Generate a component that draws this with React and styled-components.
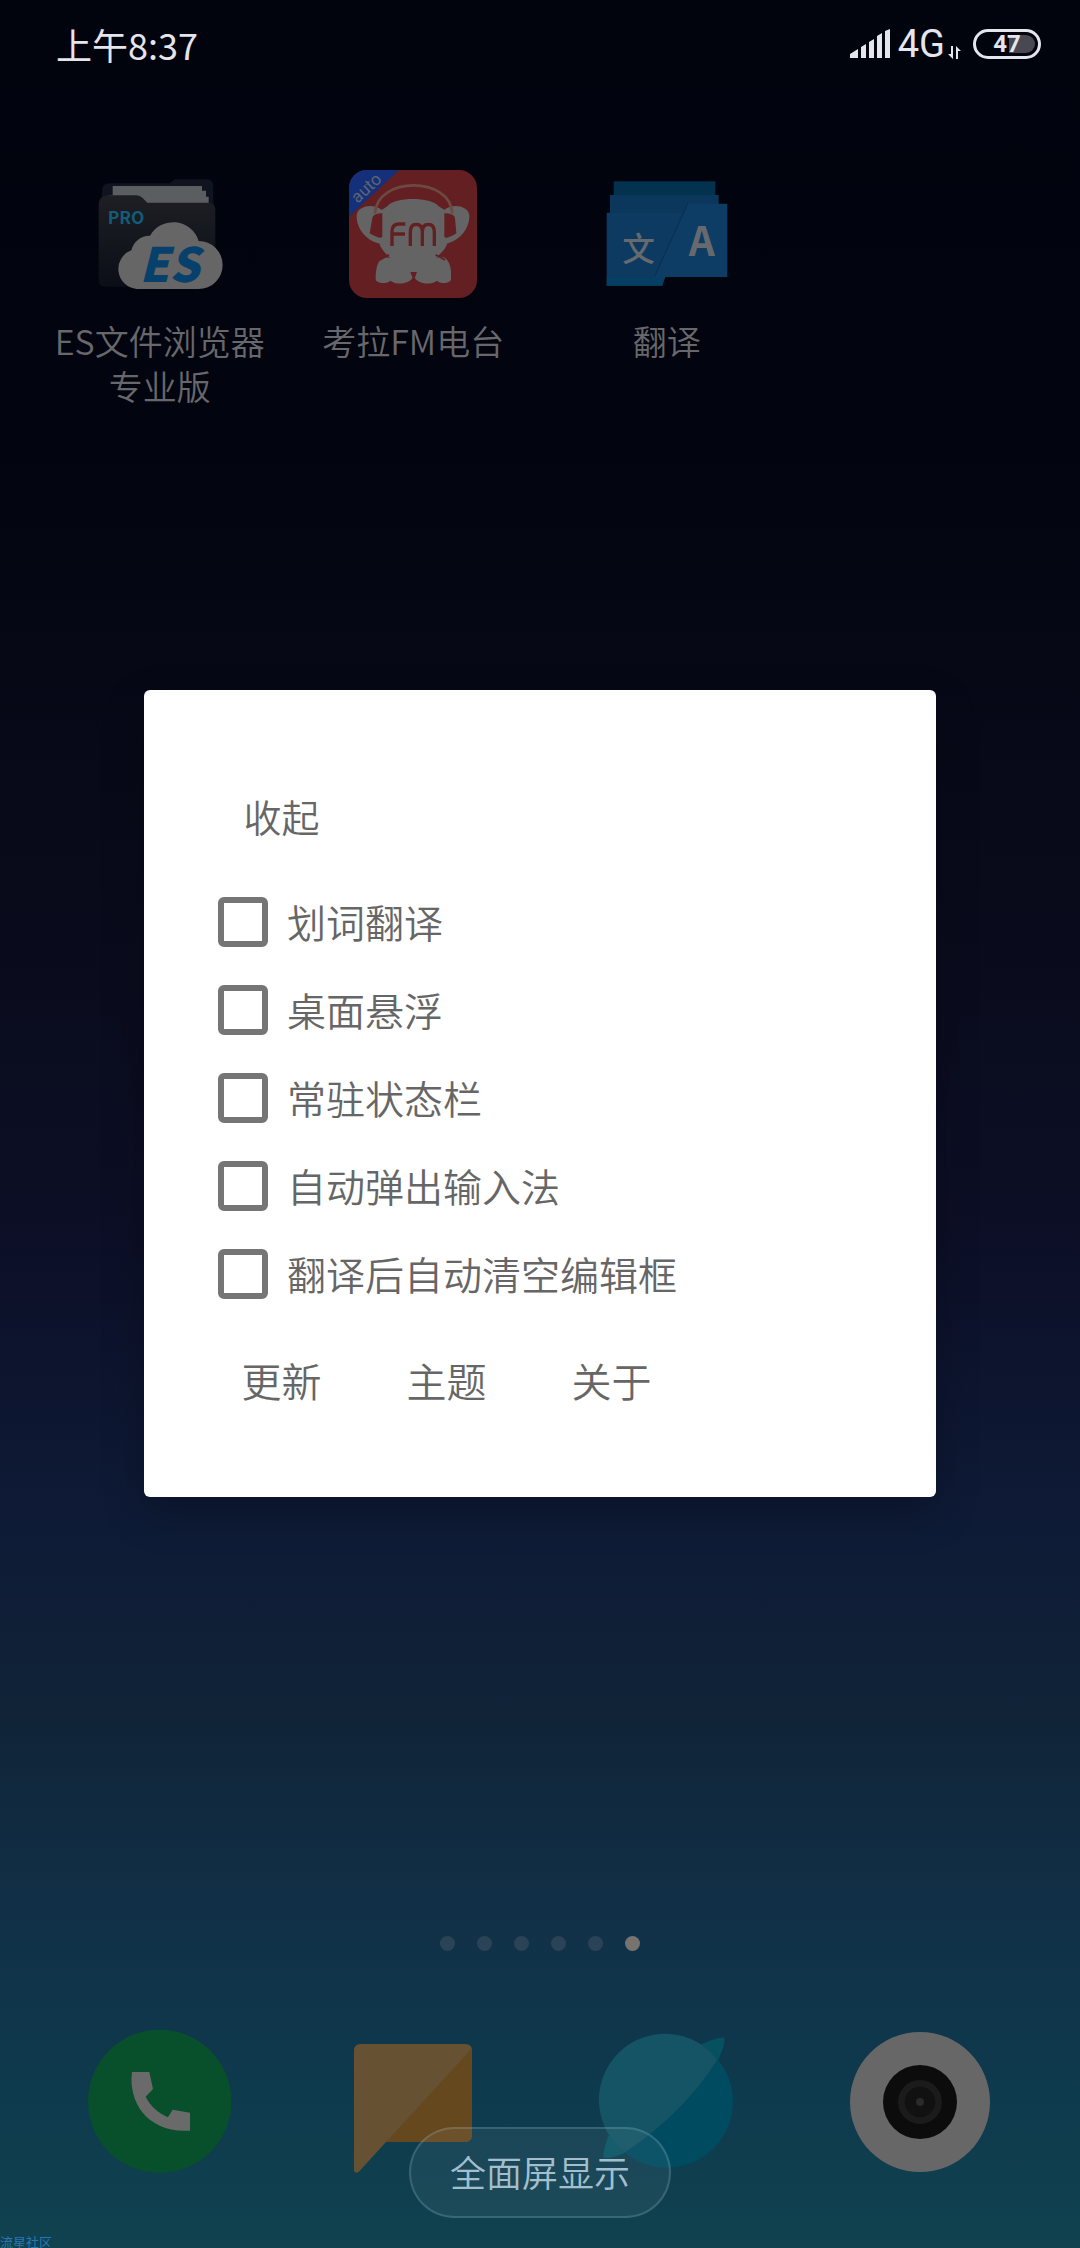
import React from 'react';
import styled, {createGlobalStyle} from 'styled-components';


const apps = [
  {name: 'ES文件浏览器专业版', Icon: EsIcon},
  {name: '考拉FM电台', Icon: KoalaIcon},
  {name: '翻译', Icon: TranslateIcon},
];

const dock = [
  {name: '电话', Icon: PhoneIcon},
  {name: '短信', Icon: MessageIcon},
  {name: '浏览器', Icon: BrowserIcon},
  {name: '相机', Icon: CameraIcon},
];

const options = ['划词翻译', '桌面悬浮', '常驻状态栏', '自动弹出输入法', '翻译后自动清空编辑框'];
const actions = ['更新', '主题', '关于'];
const pages = [0, 1, 2, 3, 4, 5];


export default () => {

    return(
        <Screen>
            <GlobalStyle />
            <StatusBar>
              <Time>上午8:37</Time>
              <StatusIcons>
                <SignalIcon />
                <Network>4G<ArrowsIcon /></Network>
                <Battery><BatteryLevel />47</Battery>
              </StatusIcons>
            </StatusBar>

            <AppGrid>
              {apps.map(({name, Icon}) => <AppButton key={name}>
                <Icon />
                <AppName>{name}</AppName>
              </AppButton>)}
            </AppGrid>

            <Dots>
              {pages.map(page => <Dot key={page} $active={page === 5} />)}
            </Dots>

            <Dock>
              {dock.map(({name, Icon}) => <DockButton key={name} aria-label={name}>
                <Icon />
              </DockButton>)}
            </Dock>

            <FullScreenButton>全面屏显示</FullScreenButton>
            <Community>流星社区</Community>

            <Overlay>
              <Dialog role="dialog">
                <DialogRow $height="122px">
                  <TextButton>收起</TextButton>
                </DialogRow>
                {options.map(option => <Option key={option}>
                  <CheckBox type="checkbox" />
                  <OptionText>{option}</OptionText>
                </Option>)}
                <DialogRow $height="128px">
                  {actions.map(action => <TextButton $large key={action}>{action}</TextButton>)}
                </DialogRow>
              </Dialog>
            </Overlay>
        </Screen>
    );

};


function SignalIcon() {
  return (
    <svg width="40" height="30" viewBox="0 0 40 30" fill="#e5e5ee">
      <path d="M0 25l8-5v9H0zM11 18l5-3v14h-5zM19 13l5-3v19h-5zM27 7l5-3v25h-5zM35 2l5-2v29h-5z" />
    </svg>
  );
}

function ArrowsIcon() {
  return (
    <svg width="13" height="13" viewBox="0 0 13 13" fill="#e5e5ee">
      <path d="M3 0h2v13L0 8h3zM8 13h2V5h3L8 0z" />
    </svg>
  );
}

function EsIcon() {
  return (
    <AppSvg viewBox="168 60 384 384">
      <defs>
        <linearGradient id="folder" x1="0" y1="0" x2="0" y2="1">
          <stop offset="0" stopColor="#1d1f24" />
          <stop offset="1" stopColor="#0b0e17" />
        </linearGradient>
      </defs>
      <path d="M186 170v-48q0-22 24-22h180l14-12h96q20 0 20 22v60z" fill="#101320" />
      <path d="M218 108h268v14h12v18h8v26H206v-30h12z" fill="#5a5e60" />
      <path d="M176 166q0-30 28-30h86q10 0 18 8l14 14h182q22 0 22 22v210q0 20-20 20H196q-20 0-20-20z" fill="url(#folder)" />
      <Glyphs x="203" y="221" fontSize="52" fontWeight="700" fill="#145b78">PRO</Glyphs>
      <path d="M290 417a60 60 0 0 1-16-116 56 56 0 0 1 56-44 80 80 0 0 1 146 16 72 72 0 0 1 0 144z" fill="#666" />
      <Glyphs x="298" y="397" fontSize="142" fontWeight="900" fontStyle="italic" fill="#07416b">ES</Glyphs>
    </AppSvg>
  );
}

function KoalaIcon() {
  return (
    <AppSvg viewBox="120 60 384 384">
      <clipPath id="tile"><rect x="120" y="60" width="384" height="384" rx="54" /></clipPath>
      <g clipPath="url(#tile)">
        <rect x="120" y="60" width="384" height="384" fill="#641f22" />
        <path d="M120 60h150L120 200z" fill="#14307a" />
        <g fill="#646464">
          <path d="M213 176c-26-16-68-6-70 20-2 38 28 76 66 84l20 2v-96zM411 176c26-16 68-6 70 20 2 38-28 76-66 84l-20 2v-96z" />
          <path d="M236 168c20-28 130-28 152 0l32 20v60c0 40-16 54-40 76 24-12 42 4 46 38v26c-2 14-34 14-42 4-20 14-58 12-70-14-12 26-50 28-70 14-8 10-42 10-44-4 0-44 10-72 44-64-22-20-38-38-38-76v-60z" />
        </g>
        <path d="M198 190c6-112 226-112 232 0" fill="none" stroke="#6b4a43" strokeWidth="8" />
        <path d="M190 204q2-14 30-14v70q-4 10-38-10zM438 204q-2-14-32-14v70q4 10 36-10z" fill="#641f22" />
        <path d="M249 288v-44q0-22 22-22h18M250 252h38M304 288v-42q0-23 18-23t18 23v42M340 246q0-23 18-23t18 23v42" fill="none" stroke="#641f22" strokeWidth="10" />
        <path d="M212 330l28-16M408 330l-28-16" fill="none" stroke="#641f22" strokeWidth="5" />
        <path d="M304 366h20l-10 26z" fill="#641f22" />
      </g>
      <AutoLabel x="-52" y="14" fontSize="52" fill="#5f6472" transform="translate(174 116) rotate(-43)">auto</AutoLabel>
    </AppSvg>
  );
}

function TranslateIcon() {
  return (
    <AppSvg viewBox="102 60 384 384">
      <path d="M134 94h305v50H134z" fill="#03324e" />
      <path d="M123 135h326v60H123z" fill="#0b375c" />
      <path d="M113 188h235l-68 219H113z" fill="#0c3a61" />
      <path d="M113 380h176l-10 27H113z" fill="#073e63" />
      <path d="M356 161h119v220H256z" fill="#0d3c65" />
      <path d="M356 161l-100 220" stroke="#092f50" strokeWidth="3" />
      <Glyphs x="160" y="332" fontSize="98" fontWeight="500" fill="#66696e">文</Glyphs>
      <Glyphs x="359" y="317" fontSize="122" fontWeight="700" fill="#66696e">A</Glyphs>
    </AppSvg>
  );
}

function PhoneIcon() {
  return (
    <DockSvg viewBox="84 387 432 432">
      <circle cx="299" cy="604" r="215" fill="#08502b" />
      <path d="M216 516h52l11 51-22 23c14 28 36 48 67 62l14-23 52 9v54c-126 8-186-84-174-176z" fill="#6a6a6a" />
    </DockSvg>
  );
}

function MessageIcon() {
  return (
    <DockSvg viewBox="846 387 432 432">
      <path d="M905 432h314q20 0 20 20v254q0 20-20 20H981l-80 88q-8 8-16 0V452q0-20 20-20z" fill="#665132" />
      <path d="M1238 446v260q0 20-20 20H981z" fill="#65481e" />
    </DockSvg>
  );
}

function BrowserIcon() {
  return (
    <DockSvg viewBox="615 387 432 432">
      <path d="M928 436q40-20 72-24 12 10-18 74z" fill="#07505f" />
      <path d="M656 706q-18 46-16 66 22 8 74-18z" fill="#0a5565" />
      <circle cx="831" cy="605" r="198" fill="#004b5f" />
      <path d="M982 479A198 198 0 1 0 705 757q178-120 277-278z" fill="#155464" />
    </DockSvg>
  );
}

function CameraIcon() {
  return (
    <DockSvg viewBox="267 387 432 432">
      <circle cx="483" cy="606" r="210" fill="#676767" />
      <circle cx="483" cy="606" r="111" fill="#0c0c0c" />
      <circle cx="483" cy="606" r="56" fill="#111" stroke="#1b1b1b" strokeWidth="20" />
      <circle cx="483" cy="606" r="12" fill="#2a2a2a" />
    </DockSvg>
  );
}


const GlobalStyle = createGlobalStyle`
    body {
      margin: 0;
      font-family: "Noto Sans CJK SC", "Noto Sans", sans-serif;
    }

    * {
      box-sizing: border-box;
    }

    button {
      padding: 0;
      border: 0;
      background: none;
      font-family: inherit;
      cursor: pointer;
    }
`;

const Screen = styled.div`
    position: relative;
    display: flex;
    flex-direction: column;
    min-height: 100vh;
    padding-bottom: 75px;
    background: linear-gradient(#01030d 0%, #02040f 20%, #060816 30%, #090b1b 40%, #0c0e25 54%, #0e1a36 67%, #102337 76%, #113047 85%, #0e3a4d 93%, #10424f 100%);
`;

const StatusBar = styled.header`
    display: flex;
    justify-content: space-between;
    align-items: center;
    height: 90px;
    padding: 0 39px 2px 56px;
    color: #e5e5ee;
`;

const Time = styled.time`
    font-size: 36px;
    line-height: 40px;
`;

const StatusIcons = styled.div`
    display: flex;
    align-items: center;
    gap: 8px;
`;

const Network = styled.span`
    display: flex;
    align-items: flex-end;
    gap: 3px;
    padding-right: 4px;
    font-family: Roboto, sans-serif;
    font-size: 38px;
    line-height: 38px;

    svg {
      margin-bottom: 4px;
    }
`;

const Battery = styled.div`
    position: relative;
    z-index: 0;
    display: flex;
    align-items: center;
    justify-content: center;
    width: 68px;
    height: 30px;
    border: 3px solid #e5e5ee;
    border-radius: 15px;
    font-family: Roboto, sans-serif;
    font-size: 24px;
    line-height: 24px;
    font-weight: 700;
`;

const BatteryLevel = styled.span`
    position: absolute;
    z-index: -1;
    top: 3px;
    right: 3px;
    bottom: 3px;
    width: 26px;
    border-radius: 0 9px 9px 0;
    background: #484852;
`;

const AppGrid = styled.main`
    display: grid;
    grid-template-columns: repeat(4, 1fr);
    align-items: start;
    padding: 80px 33px 0;
`;

const AppButton = styled.button`
    display: flex;
    flex-direction: column;
    align-items: center;
    gap: 20px;
`;

const AppSvg = styled.svg`
    width: 128px;
    height: 128px;
    overflow: visible;
`;

const Glyphs = styled.text`
    font-family: "Noto Sans CJK SC", sans-serif;
`;

const AutoLabel = styled.text`
    font-family: Roboto, sans-serif;
`;

const AppName = styled.span`
    width: 228px;
    color: #68686c;
    font-size: 34px;
    font-weight: 350;
    line-height: 45px;
    text-align: center;
`;

const Dots = styled.div`
    display: flex;
    justify-content: center;
    gap: 22px;
    margin-top: auto;
    padding-bottom: 78px;
`;

const Dot = styled.span`
    width: 15px;
    height: 15px;
    border-radius: 50%;
    background: ${props => props.$active ? '#77736f' : '#2b4357'};
`;

const Dock = styled.nav`
    display: grid;
    grid-template-columns: repeat(4, 1fr);
    padding: 0 33px;
`;

const DockButton = styled.button`
    display: flex;
    justify-content: center;
`;

const DockSvg = styled.svg`
    width: 144px;
    height: 144px;
`;

const FullScreenButton = styled.button`
    && {
      position: absolute;
      bottom: 30px;
      left: 50%;
      width: 262px;
      height: 91px;
      margin-left: -131px;
      padding-bottom: 4px;
      border: 2px solid rgba(170, 215, 230, .2);
      border-radius: 46px;
      background: rgba(220, 230, 255, .06);
      color: #a3bfcd;
      font-size: 36px;
      font-weight: 350;
    }
`;

const Community = styled.small`
    position: absolute;
    bottom: 0;
    left: 0;
    color: #2878b4;
    font-size: 13px;
    line-height: 13px;
`;

const Overlay = styled.div`
    position: absolute;
    inset: 0;
    display: flex;
    align-items: center;
    justify-content: center;
    padding: 0 144px 61px;
    pointer-events: none;
`;

const Dialog = styled.section`
    width: 100%;
    padding: 66px 55px 51px;
    border-radius: 6px;
    background: #fff;
    box-shadow: 0 16px 40px rgba(0, 0, 0, .25);
    color: #666;
    pointer-events: auto;
`;

const DialogRow = styled.div`
    display: flex;
    height: ${props => props.$height};
`;

const TextButton = styled.button`
    && {
      width: 165px;
      padding-bottom: 4px;
      color: #666;
      font-size: ${props => props.$large ? '40px' : '38px'};
      font-weight: 350;
    }
`;

const Option = styled.label`
    display: flex;
    align-items: center;
    gap: 19px;
    height: 88px;
    padding-left: 19px;
    font-size: 39px;
    font-weight: 350;
`;

const OptionText = styled.span`
    padding-bottom: 2px;
`;

const CheckBox = styled.input`
    appearance: none;
    width: 50px;
    height: 50px;
    margin: 0;
    border: 6px solid #757575;
    border-radius: 6px;

    &:checked {
      background: #757575;
    }
`;
